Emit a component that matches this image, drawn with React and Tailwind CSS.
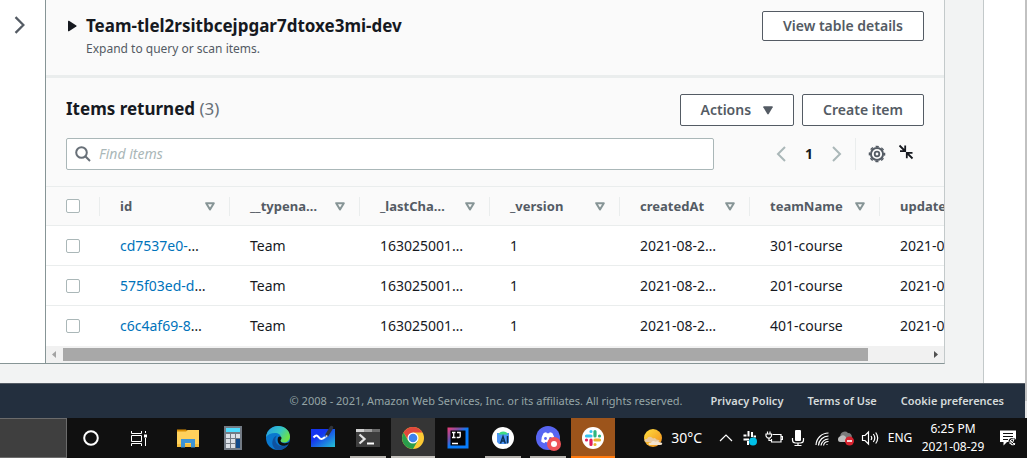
import React from "react";

const columns = ["id", "__typena…", "_lastCha…", "_version", "createdAt", "teamName", "updatedAt"];

const rows = [
  { id: "cd7537e0-", cells: ["Team", "163025001…", "1", "2021-08-2…", "301-course", "2021-08-2…"] },
  { id: "575f03ed-d", cells: ["Team", "163025001…", "1", "2021-08-2…", "201-course", "2021-08-2…"] },
  { id: "c6c4af69-8", cells: ["Team", "163025001…", "1", "2021-08-2…", "401-course", "2021-08-2…"] },
];

function Chevron({ dir, className }) {
  return (
    <svg viewBox="0 0 16 16" className={className} fill="none" stroke="currentColor" strokeWidth="2">
      {dir === "left" ? <path d="M12 1 5 8l7 7" /> : <path d="m4 1 7 7-7 7" />}
    </svg>
  );
}

function Button({ children, className = "" }) {
  return (
    <button
      type="button"
      className={`flex items-center justify-center rounded-xs border border-[#545b64] bg-white px-5 text-sm font-semibold whitespace-nowrap text-[#545b64] ${className}`}
    >
      {children}
    </button>
  );
}

function Checkbox({ label }) {
  return (
    <input
      type="checkbox"
      aria-label={label}
      className="block size-3.5 appearance-none rounded-xs border border-[#aab7b8] bg-white"
    />
  );
}

function TableHeader() {
  return (
    <section className="flex items-start justify-between border-b-3 border-[#eaeded] px-5 pt-[11px] pb-[18px]">
      <div className="flex gap-2">
        <svg viewBox="0 0 10 12" className="mt-[9px] h-3 w-3" fill="#16191f">
          <path d="M1 1.5Q1 .3 2 .8L9.3 5.4q.8.6 0 1.2L2 11.200Q1 11.700 1 10.500Z" />
        </svg>
        <div>
          <h2 className="text-[17px] leading-[30px] font-bold text-[#16191f]">
            Team-tlel2rsitbcejpgar7dtoxe3mi-dev
          </h2>
          <p className="text-xs leading-4 text-[#545b64]">Expand to query or scan items.</p>
        </div>
      </div>
      <Button className="h-[30px]">View table details</Button>
    </section>
  );
}

function Toolbar() {
  return (
    <section className="px-5 pt-4 pb-4">
      <div className="flex items-start justify-between">
        <h2 className="text-[17px] leading-[30px] font-bold text-[#16191f]">
          Items returned <span className="font-normal text-[#687078]">(3)</span>
        </h2>
        <div className="flex gap-2">
          <Button className="h-8 gap-3">
            Actions
            <svg viewBox="0 0 10 9" className="h-[9px] w-2.5" fill="#545b64">
              <path d="M.3 1.200Q0 .3.900.3h8.200q.9 0 .6.900L5.700 8.100q-.7.9-1.400 0Z" />
            </svg>
          </Button>
          <Button className="h-8">Create item</Button>
        </div>
      </div>
      <div className="mt-3 flex items-center">
        <label className="flex h-8 max-w-[648px] flex-1 items-center gap-2 rounded-xs border border-[#aab7b8] bg-white pl-2">
          <svg viewBox="0 0 16 16" className="size-4" fill="none" stroke="#687078" strokeWidth="2">
            <circle cx="6.500" cy="6.500" r="5.300" />
            <path d="m10.300 10.300 4.700 4.700" />
          </svg>
          <input
            type="text"
            aria-label="Find items"
            placeholder="Find items"
            className="min-w-0 flex-1 bg-transparent text-sm outline-none placeholder:text-[#aab7b8] placeholder:italic"
          />
        </label>
        <nav aria-label="Pagination" className="ml-auto flex items-center gap-3">
          <button type="button" aria-label="Previous page" className="text-[#aab7b8]">
            <Chevron dir="left" className="size-4" />
          </button>
          <span className="w-4 text-center text-sm font-bold text-[#16191f]">1</span>
          <button type="button" aria-label="Next page" className="text-[#aab7b8]">
            <Chevron dir="right" className="size-4" />
          </button>
        </nav>
        <div className="ml-2.5 flex h-8 items-center gap-3 border-l border-[#eaeded] pr-2.5 pl-3">
          <button type="button" aria-label="Preferences">
            <svg viewBox="0 0 18 18" className="size-[18px]" fill="none" stroke="#545b64">
              <circle cx="9" cy="9" r="6.100" strokeWidth="2" />
              <circle cx="9" cy="9" r="7.600" strokeWidth="1.400" strokeDasharray="3.200 2.769" strokeDashoffset="1.600" />
              <circle cx="9" cy="9" r="2.300" strokeWidth="1.800" />
            </svg>
          </button>
          <button type="button" aria-label="Collapse" className="pb-1">
            <svg viewBox="0 0 16 16" className="size-4" fill="none" stroke="#16191f" strokeWidth="1.800">
              <path d="m1.500 1.500 5 5M7.200 1.500v5.700H2M14.500 14.500l-5-5M8.800 14.200V8.800H14.500" />
            </svg>
          </button>
        </div>
      </div>
    </section>
  );
}

function ItemsTable() {
  return (
    <div className="overflow-hidden">
      <table className="w-[963px] table-fixed border-collapse text-left text-sm text-[#16191f]">
        <colgroup>
          <col className="w-[53px]" />
          {columns.map((c) => (
            <col key={c} className="w-[130px]" />
          ))}
        </colgroup>
        <thead>
          <tr className="h-[39px] border-y border-[#eaeded] bg-[#fafafa] text-[13px] text-[#545b64]">
            <th className="p-0 pl-5">
              <Checkbox label="Select all items" />
            </th>
            {columns.map((c) => (
              <th key={c} className="p-0 font-bold">
                <div className="flex h-[19px] items-center justify-between border-l border-[#eaeded] pr-3.5 pl-5">
                  {c}
                  <svg viewBox="0 0 10 9" className="h-[9px] w-2.5 shrink-0" fill="none" stroke="#879596" strokeWidth="2">
                    <path d="M1.200 1.200h7.600L5 7.500Z" strokeLinejoin="round" />
                  </svg>
                </div>
              </th>
            ))}
          </tr>
        </thead>
        <tbody>
          {rows.map((r) => (
            <tr key={r.id} className="h-10 border-b border-[#eaeded] bg-white last:border-b-0">
              <td className="p-0 pl-5">
                <Checkbox label={`Select ${r.id}`} />
              </td>
              <td className="p-0 pl-[21px] whitespace-nowrap">
                <a href="#item" className="text-[#0073bb]">{r.id}</a>…
              </td>
              {r.cells.map((v, i) => (
                <td key={i} className="p-0 pl-[21px] whitespace-nowrap">{v}</td>
              ))}
            </tr>
          ))}
        </tbody>
      </table>
      <div className="flex h-[17px] items-center bg-[#f1f1f1]">
        <svg viewBox="0 0 17 17" className="size-[17px]" fill="#a3a3a3">
          <path d="M10 5v7L6 8.500Z" />
        </svg>
        <div className="mr-auto h-[13px] w-[92.500%] max-w-[805px] bg-[#a8a8a8]" />
        <svg viewBox="0 0 17 17" className="size-[17px]" fill="#505050">
          <path d="M7 5v7l4-3.500Z" />
        </svg>
      </div>
    </div>
  );
}

function Footer() {
  return (
    <footer className="flex h-[35px] items-center justify-end border-t border-[#545b64] bg-[#232f3e] pt-0.5 pr-[21px] text-[11px] whitespace-nowrap">
      <span className="mr-7 text-[#95a5a6]">
        © 2008 - 2021, Amazon Web Services, Inc. or its affiliates. All rights reserved.
      </span>
      <div className="flex gap-6 font-semibold text-[#d5dbdb]">
        <a href="#privacy">Privacy Policy</a>
        <a href="#terms">Terms of Use</a>
        <a href="#cookies">Cookie preferences</a>
      </div>
    </footer>
  );
}

const apps = [
  {
    name: "File Explorer",
    icon: (
      <>
        <path d="M1 3.500h9l2 2v3H1Z" fill="#d98e04" />
        <path d="M1 5.500h9l1.500-1.500H23v17H1Z" fill="#ffd15c" />
        <path d="M1 18h22v3H1Z" fill="#f5bd3c" />
        <path d="M5 13h14v8.500h-4V17H9v4.500H5Z" fill="#3d94d6" />
      </>
    ),
  },
  {
    name: "Calculator",
    icon: (
      <>
        <path d="M3 0h18v24H3Z" fill="#737b85" />
        <path d="M5 2h14v4H5Z" fill="#4fdcff" />
        <path d="M5 8h4v4H5ZM10 8h4v4h-4ZM15 8h4v4h-4ZM5 13h4v4H5ZM10 13h4v4h-4ZM5 18h4v4H5ZM10 18h4v4h-4Z" fill="#dce1e8" />
        <path d="M15 13h4v9h-4Z" fill="#114a8b" />
      </>
    ),
  },
  {
    name: "Edge",
    icon: (
      <>
        <defs>
          <linearGradient id="edge" x1="0" y1="0" x2="1" y2=".5">
            <stop offset=".2" stopColor="#2ba8dd" />
            <stop offset=".6" stopColor="#35c6c4" />
            <stop offset="1" stopColor="#6be24a" />
          </linearGradient>
        </defs>
        <circle cx="12" cy="12" r="12" fill="#0a78cf" />
        <path d="M0 11C1 4 6 0 12 0c7 0 12 5 12 10.500 0 4-3 6-6 6-2.500 0-4-1-4-2 0-.700 1-1 1-3 0-2.500-2.500-4.500-6-4.500-4 0-7 1.500-9 4Z" fill="url(#edge)" />
        <path d="M11 9.500c-3 3-2 9.500 4 10.500 3 .500 5.500-.500 7.500-2-2 4-6 6-10.500 6C8 23.500 5.500 19 6.500 15c.500-3 2.500-5 4.500-5.500Z" fill="#0f52a0" />
        <path d="M14.500 14.500c0 1.500 2 3 4.500 2.800 2-.1 3.500-.8 4.500-1.800l-1 2.500c-2 1.500-4.500 2.200-7 1.500-3.500-1-4.500-5-3.500-8 1-1.500 3.500-1 3.500.5 0 1.500-1 1.800-1 2.500Z" fill="#101010" />
      </>
    ),
  },
  {
    name: "Whiteboard",
    icon: (
      <>
        <defs>
          <linearGradient id="board" x1="0" y1="0" x2="1" y2="1">
            <stop offset=".35" stopColor="#1435f0" />
            <stop offset="1" stopColor="#24c3d3" />
          </linearGradient>
        </defs>
        <path d="M0 3h24v18H0Z" fill="url(#board)" />
        <path d="M2.500 11.500c3-3.500 4-2 5.500 0s3.500 2 6-.5" fill="none" stroke="#fff" strokeWidth="2" />
        <path d="m20.500 1.500-4.500 7.500" stroke="#30343c" strokeWidth="3.500" strokeLinecap="round" />
        <path d="m15 9-1 3.500 3-2.500Z" fill="#d8dce2" />
      </>
    ),
  },
  {
    name: "Terminal",
    running: true,
    icon: (
      <>
        <path d="M0 3h24v18H0Z" fill="#3d3d3d" />
        <path d="M0 3h8v3H0Z" fill="#d0d0d0" />
        <path d="M8 3h8v3H8Z" fill="#a0a0a0" />
        <path d="M16 3h8v3h-8Z" fill="#6c6c6c" />
        <path d="m3.500 8.500 5 4.500-5 4.500" fill="none" stroke="#e4e4e4" strokeWidth="2.300" />
        <path d="M11 17.500h7" stroke="#fff" strokeWidth="2" />
      </>
    ),
  },
  {
    name: "Chrome",
    active: "bg-[#353535]",
    icon: (
      <>
        <circle cx="12" cy="12" r="11" fill="#fcc934" />
        <path d="M2.500 6.500A11 11 0 0 1 21.500 6.500H12v5.500L7.500 14.500Z" fill="#e0483c" />
        <path d="M2.500 6.500A11 11 0 0 0 12 23l4.800-8.300L12 12l-4.800 2.700Z" fill="#2a9d4c" />
        <circle cx="12" cy="12" r="5.500" fill="#fff" />
        <circle cx="12" cy="12" r="4.300" fill="#3f82ee" />
      </>
    ),
  },
  {
    name: "IntelliJ IDEA",
    icon: (
      <>
        <defs>
          <linearGradient id="idea" x1="0" y1="0" x2="1" y2="1">
            <stop offset="0" stopColor="#f23d76" />
            <stop offset=".3" stopColor="#7852a8" />
            <stop offset=".5" stopColor="#087cfa" />
            <stop offset="1" stopColor="#087cfa" />
          </linearGradient>
        </defs>
        <path d="M1.500 1.500h21v21h-21Z" fill="url(#idea)" />
        <path d="M4.500 4.500h15v15h-15Z" fill="#050505" />
        <path d="M6 6.500h3.500M7.700 6.500v5M6 11.500h3.500M11 6.500h3.200v3.700q0 1.300-1.300 1.300h-2.200M6 17.500h6" fill="none" stroke="#fff" strokeWidth="1.300" />
      </>
    ),
  },
  {
    name: "Android Studio",
    running: true,
    icon: (
      <>
        <circle cx="12" cy="12" r="11" fill="#fff" />
        <path d="M6 7h12v9.500l-3 1.500h-7l-2-2Z" fill="#4c94f5" />
        <path d="M7.500 8.500a5 4.500 0 0 1 9.500 0Z" fill="#3ddc84" />
        <path d="m9.500 17.500 2.500-7 2.300 7M10.300 15h3.400M16.500 10v7.500" fill="none" stroke="#0b3156" strokeWidth="1.500" />
      </>
    ),
  },
  {
    name: "Discord",
    running: true,
    icon: (
      <>
        <circle cx="12" cy="12" r="12" fill="#5865f2" />
        <path d="M7.500 7.200q1.500-.8 2.800-.9l.5.900h2.400l.5-.9q1.300.1 2.800.9 2.500 4 2.300 8.300-1.500 1.200-3.200 1.700l-.8-1.300q-2.800.8-5.600 0l-.8 1.300q-1.700-.5-3.200-1.700-.2-4.300 2.300-8.300Z" fill="#fff" />
        <circle cx="9.500" cy="12.500" r="1.400" fill="#5865f2" />
        <circle cx="14.500" cy="12.500" r="1.400" fill="#5865f2" />
        <circle cx="18" cy="18" r="7" fill="#ee5257" />
        <circle cx="18" cy="18" r="3" fill="#fff" />
      </>
    ),
  },
  {
    name: "Slack",
    active: "bg-[#9c541b]",
    icon: (
      <>
        <circle cx="12" cy="12" r="11" fill="#fff" />
        <g fill="none" strokeWidth="3.200" strokeLinecap="round">
          <path d="M10 5.500v.01M5.500 10H10" stroke="#36c5f0" />
          <path d="M14 5.500V10M18.500 10v.01" stroke="#2eb67d" />
          <path d="M14 18.500v.01M14 14h4.500" stroke="#ecb22e" />
          <path d="M10 14v4.500M5.500 14v.01" stroke="#e01e5a" />
        </g>
      </>
    ),
  },
];

function AppButton({ app }) {
  return (
    <button
      type="button"
      aria-label={app.name}
      className={`relative flex h-full w-11 items-center justify-center ${app.active ?? ""}`}
    >
      <svg viewBox="0 0 24 24" className="size-6 overflow-visible">{app.icon}</svg>
      {app.running && <span className="absolute inset-x-1 bottom-0 h-0.5 bg-[#b5b2ae]" />}
      {app.name === "Chrome" && <span className="absolute inset-x-0 bottom-0 h-0.5 bg-[#c4c1bd]" />}
      {app.name === "Slack" && <span className="absolute inset-x-0 bottom-0 h-0.5 bg-[#ff7a0f]" />}
    </button>
  );
}

const tray = [
  { name: "Show hidden icons", icon: <path d="m3 12 6-6 6 6" /> },
  {
    name: "Slack status",
    icon: (
      <>
        <path d="M7.500 2v5.500M2.500 6.500h3M11 3v5M12.500 7.500H15M2.500 10.500H8M7 12v4" strokeWidth="2" />
        <circle cx="12" cy="12.500" r="4" fill="#00c0e8" stroke="none" />
      </>
    ),
  },
  {
    name: "Battery",
    icon: (
      <>
        <path d="M7.500 5.500h8.500v7.500H6.500V10M16 7.500h1.500v3H16M2.500 2.500v2.500M5 2.500v2.500M4 9v2.500h2.500" />
        <path d="M1 5h5.500v2q-1 2.200-2.700 2.200T1 7Z" />
      </>
    ),
  },
  {
    name: "Microphone",
    icon: (
      <>
        <rect x="6" y="1" width="6" height="11" rx="1" fill="#fff" stroke="none" />
        <path d="M3.500 9v2q0 3 3 3h5q3 0 3-3V9M9 14v3M5.500 16.500h7" />
      </>
    ),
  },
  {
    name: "Wireless network",
    icon: <path d="M3 16A12.500 12.500 0 0 1 15.500 4M5.500 16.500A10 10 0 0 1 15.500 7M8 16.500A7.500 7.500 0 0 1 15.500 10M10.500 16.500a5 5 0 0 1 5-4M13.500 15.500h1" />,
  },
  {
    name: "OneDrive",
    icon: (
      <>
        <path d="M3.500 13a3 3 0 0 1-.2-5.500A4.500 4.500 0 0 1 11 4q4 0 4 5v4Z" fill="#7b7b7b" stroke="none" />
        <path d="M1 10.500q0-3 3-3.500 2-1.500 4.500.5L11 13H3.500Q1 13 1 10.500Z" fill="#bdbdbd" stroke="none" />
        <circle cx="12.500" cy="12" r="4.500" fill="#d8232f" stroke="none" />
        <path d="M10 12h5" strokeWidth="1.600" />
      </>
    ),
  },
  {
    name: "Volume",
    icon: <path d="M1.500 6.500H4L7.500 3v12L4 11.500H1.500ZM10 7q1.500 2 0 4M12.300 5q3 4 0 8M14.700 3.500q4 5.500 0 11" />,
  },
];

function Taskbar() {
  return (
    <div className="flex h-10 items-center bg-[#101010] text-white">
      <div className="h-full w-[67px] border border-[#6b6b6b] border-l-0 bg-[#3f3f3f]" />
      <button type="button" aria-label="Cortana" className="flex w-12 justify-center">
        <svg viewBox="0 0 16 16" className="size-4" fill="none" stroke="#fff" strokeWidth="2">
          <circle cx="8" cy="8" r="6.800" />
        </svg>
      </button>
      <button type="button" aria-label="Task View" className="flex w-12 justify-center">
        <svg viewBox="0 0 16 16" className="size-4" fill="none" stroke="#fff">
          <path d="M.500 1v2.500h10V1M.500 5.500h10v6H.500ZM.500 16v-2.500h10V16M14.500 1v2M14.500 8v8" />
          <path d="M13 4.500h3v3h-3Z" fill="#fff" stroke="none" />
        </svg>
      </button>
      <div className="ml-[3px] flex h-full gap-px">
        {apps.map((a) => (
          <AppButton key={a.name} app={a} />
        ))}
      </div>
      <div className="ml-auto flex items-center">
        <button type="button" className="mr-3 flex items-center gap-2 text-sm">
          <svg viewBox="0 0 20 20" className="size-5">
            <defs>
              <linearGradient id="sun" x1="0" y1="0" x2="1" y2="1">
                <stop offset="0" stopColor="#ffdf3f" />
                <stop offset="1" stopColor="#f08a1a" />
              </linearGradient>
            </defs>
            <circle cx="10" cy="10" r="9" fill="url(#sun)" />
            <path d="M3 14q-2-.500-1.500-2 .500-1.500 2.500-1 1-3 4-2 1.500.500 2 1.500 2-1.500 3.500 1 3 0 3 1.500 0 1-2 1Z" fill="#e8c9a2" />
            <path d="M7 17q-2-.300-1.500-1.500.500-1.200 2.500-1 2-2.500 4.500-.800 2.500-1.200 3.500.500 3.500-.200 3.300 1.500Q19 17 17 17Z" fill="#f3e3cf" />
          </svg>
          30°C
        </button>
        {tray.map((t) => (
          <button key={t.name} type="button" aria-label={t.name} className="flex w-6 justify-center">
            <svg viewBox="0 0 18 18" className="size-[18px]" fill="none" stroke="#fff" strokeWidth="1.200">
              {t.icon}
            </svg>
          </button>
        ))}
        <button type="button" className="w-9 text-xs">ENG</button>
        <button type="button" className="w-[70px] text-center text-xs leading-[18px] whitespace-nowrap">
          <span className="block">6:25 PM</span>
          <span className="block">2021-08-29</span>
        </button>
        <button type="button" aria-label="Notifications" className="flex w-[39px] justify-center">
          <svg viewBox="0 0 18 18" className="size-[18px]">
            <path d="M1 1.500h16V13H8l-3.500 3.500V13H1Z" fill="#fff" />
            <path d="M4 4.500h10M4 7.500h10M4 10.500h5" stroke="#101010" strokeWidth="1.200" />
            <circle cx="13.500" cy="13" r="4" fill="#101010" />
            <path d="M11 15q-.5-5 4-5-.5 4-4 5M11 11l5 5M12 15.500q3 1.500 4-1.500" stroke="#fff" fill="none" />
          </svg>
        </button>
      </div>
    </div>
  );
}

export default function App() {
  return (
    <div className="font-['Noto_Sans',sans-serif]">
      <div className="flex">
        <div className="min-w-0 flex-1">
          <div className="flex bg-[#f2f3f3]">
            <aside className="mb-[19px] w-[45px] border-b border-[#879596] bg-white pt-4 pl-[11px]">
              <button type="button" aria-label="Open navigation" className="block text-[#545b64]">
                <Chevron dir="right" className="size-[18px]" />
              </button>
            </aside>
            <main className="mr-[38px] mb-[19px] min-w-0 flex-1 border border-t-0 border-[#879596] border-r-[#c3c9ca] bg-[#fafafa]">
              <TableHeader />
              <Toolbar />
              <ItemsTable />
            </main>
            <div className="w-[42px] border-l border-[#c3c9ca] bg-white" />
          </div>
          <Footer />
        </div>
        <div className="w-0.5 bg-[#e4e4e4]">
          <div className="h-[401px] bg-[#c1c1c1]" />
        </div>
      </div>
      <Taskbar />
    </div>
  );
}
